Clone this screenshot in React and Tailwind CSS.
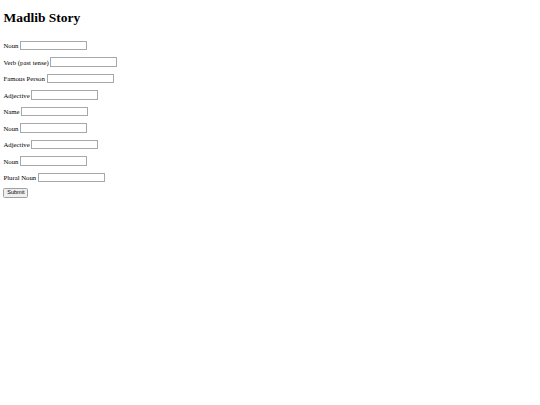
import React, { useState } from 'react';

const fields = [
  'Noun',
  'Verb (past tense)',
  'Famous Person',
  'Adjective',
  'Name',
  'Noun',
  'Adjective',
  'Noun',
  'Plural Noun',
];

const App = () => {
  const [values, setValues] = useState(fields.map(() => ''));

  const handleChange = (i, v) => {
    const next = [...values];
    next[i] = v;
    setValues(next);
  };

  return (
    <div className="min-h-[405px] bg-white text-black px-[3.4px] pt-[9.5px] font-['Liberation_Serif',serif]">
      <h1 className="text-[13.5px] leading-[15.5px] font-bold mb-[16px]">Madlib Story</h1>
      <form onSubmit={(e) => e.preventDefault()} className="flex flex-col items-start">
        <div className="flex flex-col gap-[7.5px]">
          {fields.map((label, i) => (
            <div key={i} className="flex items-center h-[9px] text-[6.75px] leading-[9px]">
              <label className="whitespace-pre">{label} </label>
              <input
                type="text"
                value={values[i]}
                onChange={(e) => handleChange(i, e.target.value)}
                className="w-[67px] h-[9.5px] border border-[#a8a8a8] bg-white outline-none text-[5.6px] px-[1px]"
              />
            </div>
          ))}
        </div>
        <button
          type="submit"
          className="mt-[6px] w-[25px] h-[9.5px] flex items-center justify-center border border-[#a0a0a0] rounded-[1.5px] bg-[#efefef] text-[5.6px] leading-none font-['Liberation_Sans',sans-serif]"
        >
          Submit
        </button>
      </form>
    </div>
  );
};

export default App;
